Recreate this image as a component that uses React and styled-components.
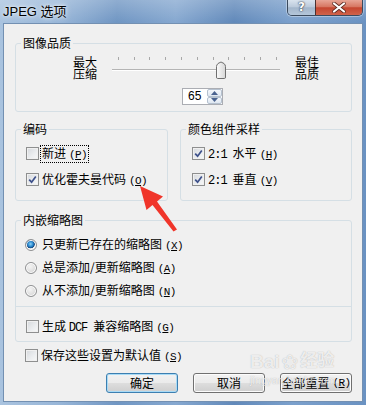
import React from "react";
import styled, { createGlobalStyle } from "styled-components";

const GlobalStyle = createGlobalStyle`
  html, body {
    margin: 0;
    padding: 0;
    background: #fff;
  }
  body {
    font-family: "Noto Sans CJK SC", "Liberation Sans", sans-serif;
    font-size: 12px;
    color: #000;
  }
`;

const TICKS = Array.from({ length: 11 }, (_, i) => 5.7 + i * 15.8);

function CheckMark() {
  return (
    <svg width="9" height="9" viewBox="0 0 9 9">
      <path d="M1.2 4.6 L3.6 7.2 L7.8 1.4" fill="none" stroke="#3d508a" strokeWidth="1.7" />
    </svg>
  );
}

function Check({ checked, children, focused }) {
  return (
    <OptionRow>
      <CheckBox>{checked && <CheckMark />}</CheckBox>
      <OptionText $focused={focused}>{children}</OptionText>
    </OptionRow>
  );
}

function Radio({ checked, children }) {
  return (
    <OptionRow $gap={4}>
      <RadioDot $checked={checked} />
      <OptionText>{children}</OptionText>
    </OptionRow>
  );
}

function Accel({ k }) {
  return (
    <AccelKey>
      (<u>{k}</u>)
    </AccelKey>
  );
}

function TrackBar() {
  return (
    <svg width="168" height="24" viewBox="0 0 168 24">
      <defs>
        <linearGradient id="thumb" x1="0" x2="1" y1="0" y2="0">
          <stop offset="0" stopColor="#fbfbfb" />
          <stop offset="1" stopColor="#d6d6d6" />
        </linearGradient>
      </defs>
      {TICKS.map((x) => (
        <rect key={x} x={Math.round(x)} y="1" width="1" height="3" fill="#a8a8a8" />
      ))}
      <rect x="0" y="13" width="168" height="1" fill="#b4b4b4" />
      <rect x="0" y="14" width="168" height="1" fill="#ffffff" />
      <path
        d="M105.5 22.5 Q104.5 22.5 104.5 21 V10.5 Q104.5 9 106 7.5 L109 6 L112 7.5 Q113.5 9 113.5 10.5 V21 Q113.5 22.5 112.5 22.5 Z"
        fill="url(#thumb)"
        stroke="#6f6f6f"
      />
    </svg>
  );
}

function SpinArrows() {
  return (
    <SpinButtons>
      <SpinHalf>
        <svg width="7" height="4" viewBox="0 0 7 4">
          <path d="M0 4 L3.5 0 L7 4 Z" fill="#4b6390" />
        </svg>
      </SpinHalf>
      <SpinHalf>
        <svg width="7" height="4" viewBox="0 0 7 4">
          <path d="M0 0 L3.5 4 L7 0 Z" fill="#4b6390" />
        </svg>
      </SpinHalf>
    </SpinButtons>
  );
}

export default function App() {
  return (
    <>
      <GlobalStyle />
      <Window>
        <TitleBar>
          <Title>JPEG 选项</Title>
          <CaptionGroup>
            <CaptionButton $variant="help">?</CaptionButton>
            <CaptionButton $variant="close">
              <svg width="14" height="11" viewBox="0 0 14 11">
                <path d="M2 1.5 L12 9.5 M12 1.5 L2 9.5" stroke="#5a2a22" strokeWidth="3.6" strokeLinecap="round" />
                <path d="M2 1.5 L12 9.5 M12 1.5 L2 9.5" stroke="#ffffff" strokeWidth="2.2" strokeLinecap="round" />
              </svg>
            </CaptionButton>
          </CaptionGroup>
        </TitleBar>

        <Client>
          <Group $h={76}>
            <Legend>图像品质</Legend>
            <QualityBody>
              <SliderRow>
                <SideLabel>
                  <SideLine>最大</SideLine>
                  <SideLine>压缩</SideLine>
                </SideLabel>
                <TrackBar />
                <SideLabel>
                  <SideLine>最佳</SideLine>
                  <SideLine>品质</SideLine>
                </SideLabel>
              </SliderRow>
              <SpinBox>
                <SpinValue>65</SpinValue>
                <SpinArrows />
              </SpinBox>
            </QualityBody>
          </Group>

          <GroupRow>
            <Group $width={153} $h={79}>
              <Legend>编码</Legend>
              <OptionList $pad="10px 0 0 10px" $gap={11}>
                <Check focused>新进<Accel k="P" /></Check>
                <Check checked>优化霍夫曼代码<Accel k="O" /></Check>
              </OptionList>
            </Group>
            <Group $grow $h={79}>
              <Legend>颜色组件采样</Legend>
              <OptionList $pad="10px 0 0 11px" $gap={11}>
                <Check checked><Mono>2:1</Mono>水平<Accel k="H" /></Check>
                <Check checked><Mono>2:1</Mono>垂直<Accel k="V" /></Check>
              </OptionList>
            </Group>
          </GroupRow>

          <Group $mt={12} $h={129}>
            <Legend>内嵌缩略图</Legend>
            <OptionList $pad="10px 0 8px 9px" $gap={8}>
              <Radio checked>只更新已存在的缩略图<Accel k="X" /></Radio>
              <Radio>总是添加/更新缩略图<Accel k="A" /></Radio>
              <Radio>从不添加/更新缩略图<Accel k="N" /></Radio>
            </OptionList>
            <Separator />
            <OptionList $pad="12px 0 0 10px" $gap={0}>
              <Check>生成 <Mono>DCF</Mono>兼容缩略图<Accel k="G" /></Check>
            </OptionList>
          </Group>

          <SaveRow>
            <Check>保存这些设置为默认值<Accel k="S" /></Check>
          </SaveRow>

          <ButtonBar>
            <PushButton $default>确定</PushButton>
            <PushButton>取消</PushButton>
            <PushButton>全部重置<Accel k="R" /></PushButton>
          </ButtonBar>
        </Client>

        <Arrow width="50" height="56" viewBox="0 0 50 56">
          <path
            d="M2 2 L25 12.5 L19 17.5 L39 45.5 L35.5 47.5 L14.5 21 L8.5 26 Z"
            fill="#f0352a"
          />
        </Arrow>

        <Watermark>
          <WaterLine>
            <WaterBig>Bai</WaterBig>
            <WaterPaw>❀</WaterPaw>
            <WaterCn>经验</WaterCn>
          </WaterLine>
          <WaterSmall>jingyan.baidu.com</WaterSmall>
        </Watermark>
      </Window>
    </>
  );
}

const Window = styled.div`
  position: relative;
  width: 366px;
  height: 405px;
  display: flex;
  flex-direction: column;
  overflow: hidden;
  background:
    linear-gradient(180deg, rgba(255, 255, 255, 0.22) 0px, rgba(255, 255, 255, 0) 22px),
    linear-gradient(
      90deg,
      #a9c3df 0%,
      #98b6d8 16%,
      #7096c3 32%,
      #86a8d0 48%,
      #6189ba 64%,
      #7ba0cc 80%,
      #6a92c2 100%
    );
`;

const TitleBar = styled.div`
  height: 23px;
  flex: none;
  display: flex;
  justify-content: space-between;
  align-items: flex-start;
`;

const Title = styled.div`
  padding: 4px 0 0 3px;
  font-family: "Liberation Sans", "Noto Sans CJK SC", sans-serif;
  font-size: 13px;
  line-height: 15px;
  color: #000;
  text-shadow: 0 0 6px rgba(255, 255, 255, 0.9), 0 0 3px rgba(255, 255, 255, 0.8);
`;

const CaptionGroup = styled.div`
  display: flex;
  margin-right: 3px;
  border: 1px solid #3b4a5e;
  border-top: none;
  border-radius: 0 0 5px 5px;
  overflow: hidden;
  box-shadow: 0 0 0 1px rgba(255, 255, 255, 0.35);
`;

const CaptionButton = styled.div`
  height: 15px;
  width: ${(p) => (p.$variant === "close" ? "46px" : "27px")};
  display: flex;
  align-items: center;
  justify-content: center;
  font-family: "DejaVu Sans", sans-serif;
  font-weight: bold;
  font-size: 12px;
  line-height: 15px;
  color: #fff;
  text-shadow: 0 0 2px #2a3442, 0 0 1px #2a3442;
  border-left: ${(p) => (p.$variant === "close" ? "1px solid #4a3030" : "none")};
  background: ${(p) =>
    p.$variant === "close"
      ? "linear-gradient(180deg, #e8a596 0%, #d77762 45%, #c54630 52%, #d0634a 100%)"
      : "linear-gradient(180deg, #d9e3ee 0%, #bccbdc 45%, #a3b6cb 52%, #b4c6da 100%)"};
`;

const Client = styled.div`
  flex: 1;
  margin: 0 3px 3px;
  background: #f0f0f0;
  border: 1px solid #7390b2;
  padding: 12px 10px 0 11px;
  display: flex;
  flex-direction: column;
`;

const Group = styled.fieldset`
  margin: ${(p) => (p.$mt ? `${p.$mt}px` : "0")} 0 0;
  padding: 0;
  min-width: 0;
  box-sizing: border-box;
  height: ${(p) => p.$h}px;
  flex: ${(p) => (p.$grow ? "1 1 0" : "none")};
  width: ${(p) => (p.$width ? `${p.$width}px` : "auto")};
  border: 1px solid #d5dfe5;
  border-radius: 3px;
`;

const Legend = styled.legend`
  margin-left: 5px;
  padding: 0 2px;
  font-size: 12px;
  line-height: 14px;
`;

const GroupRow = styled.div`
  display: flex;
  align-items: flex-start;
  gap: 12px;
  margin-top: 10px;
`;

const QualityBody = styled.div`
  padding: 6px 0 0 57px;
  display: flex;
  flex-direction: column;
`;

const SliderRow = styled.div`
  display: flex;
  align-items: center;
  gap: 15px;
  height: 24px;
`;

const SideLabel = styled.div`
  width: 24px;
  display: flex;
  flex-direction: column;
`;

const SideLine = styled.div`
  height: 12px;
  font-size: 12px;
  line-height: 12px;
`;

const SpinBox = styled.div`
  margin: 8px 0 0 109px;
  width: 41px;
  height: 17px;
  box-sizing: border-box;
  border: 1px solid #abadb3;
  background: #fff;
  display: flex;
  align-items: center;
  justify-content: space-between;
`;

const SpinValue = styled.span`
  padding-left: 5px;
  font-family: "Liberation Sans", sans-serif;
  font-size: 12px;
  line-height: 15px;
`;

const SpinButtons = styled.div`
  width: 15px;
  height: 15px;
  display: flex;
  flex-direction: column;
`;

const SpinHalf = styled.div`
  flex: 1;
  display: flex;
  align-items: center;
  justify-content: center;
  border: 1px solid #b5c1cf;
  border-radius: 2px;
  background: linear-gradient(180deg, #f4f7fb 0%, #dfe7f1 100%);
`;

const OptionList = styled.div`
  display: flex;
  flex-direction: column;
  gap: ${(p) => p.$gap}px;
  padding: ${(p) => p.$pad};
`;

const OptionRow = styled.div`
  display: flex;
  align-items: center;
  gap: ${(p) => (p.$gap != null ? p.$gap : 2)}px;
  height: 15px;
  white-space: nowrap;
`;

const CheckBox = styled.span`
  width: 13px;
  height: 13px;
  flex: none;
  box-sizing: border-box;
  border: 1px solid #8e8f8f;
  padding: 1px;
  background: #fff;
  display: flex;
  align-items: center;
  justify-content: center;
  background-clip: content-box;
  background-image: linear-gradient(135deg, #d5d8dc 0%, #eceef0 60%, #f8f8f8 100%);
`;

const RadioDot = styled.span`
  width: 12px;
  height: 12px;
  flex: none;
  box-sizing: border-box;
  border-radius: 50%;
  border: 1px solid #8f9092;
  background: ${(p) =>
    p.$checked
      ? "radial-gradient(circle at 45% 40%, #8fd2f6 0px, #2a8ad0 2.5px, #14487f 4px, #e8e8e8 4.6px, #f6f6f6 100%)"
      : "radial-gradient(circle at 40% 35%, #f4f4f4 0px, #e3e3e3 4px, #d0d0d0 100%)"};
  box-shadow: inset 0 0 0 1px #ffffff;
`;

const OptionText = styled.span`
  font-size: 12px;
  line-height: 14px;
  padding: 0 1px;
  outline: ${(p) => (p.$focused ? "1px dotted #000" : "none")};
`;

const AccelKey = styled.span`
  margin-left: 3px;
  font-family: "Liberation Mono", monospace;
  font-size: 11px;
  letter-spacing: -0.6px;
`;

const Mono = styled.span`
  margin-right: 6px;
  font-family: "Liberation Mono", monospace;
  font-size: 12px;
  letter-spacing: -1px;
`;

const Separator = styled.div`
  height: 1px;
  margin: 0 -1px;
  background: #d5dfe5;
`;

const SaveRow = styled.div`
  margin-top: 6px;
  padding-left: 10px;
`;

const ButtonBar = styled.div`
  margin-top: 10px;
  display: flex;
  justify-content: flex-end;
  gap: 15px;
`;

const PushButton = styled.div`
  width: 72px;
  height: 20px;
  box-sizing: border-box;
  border: 1px solid ${(p) => (p.$default ? "#3c7fb1" : "#707070")};
  border-radius: 3px;
  display: flex;
  align-items: center;
  justify-content: center;
  font-size: 12px;
  line-height: 14px;
  background: linear-gradient(180deg, #f2f2f2 0%, #ebebeb 48%, #dddddd 52%, #cfcfcf 100%);
  box-shadow: inset 0 0 0 1px ${(p) => (p.$default ? "#a9dbf6" : "#fcfcfc")};
`;

const Arrow = styled.svg`
  position: absolute;
  left: 138px;
  top: 184px;
  pointer-events: none;
`;

const Watermark = styled.div`
  position: absolute;
  left: 250px;
  top: 352px;
  pointer-events: none;
  color: rgba(255, 255, 255, 0.8);
  text-shadow: 0 0 1px rgba(110, 110, 110, 0.55);
`;

const WaterLine = styled.div`
  display: flex;
  align-items: center;
`;

const WaterBig = styled.span`
  font-family: "Liberation Sans", sans-serif;
  font-weight: bold;
  font-size: 19px;
  line-height: 20px;
`;

const WaterPaw = styled.span`
  font-family: "DejaVu Sans", sans-serif;
  font-size: 20px;
  line-height: 20px;
  margin: 0 2px;
`;

const WaterCn = styled.span`
  font-family: "Noto Sans CJK SC", sans-serif;
  font-weight: bold;
  font-size: 17px;
  line-height: 20px;
  margin-top: -6px;
`;

const WaterSmall = styled.div`
  font-family: "Liberation Sans", sans-serif;
  font-size: 10px;
  line-height: 11px;
  margin-top: 3px;
  letter-spacing: 0.3px;
`;
